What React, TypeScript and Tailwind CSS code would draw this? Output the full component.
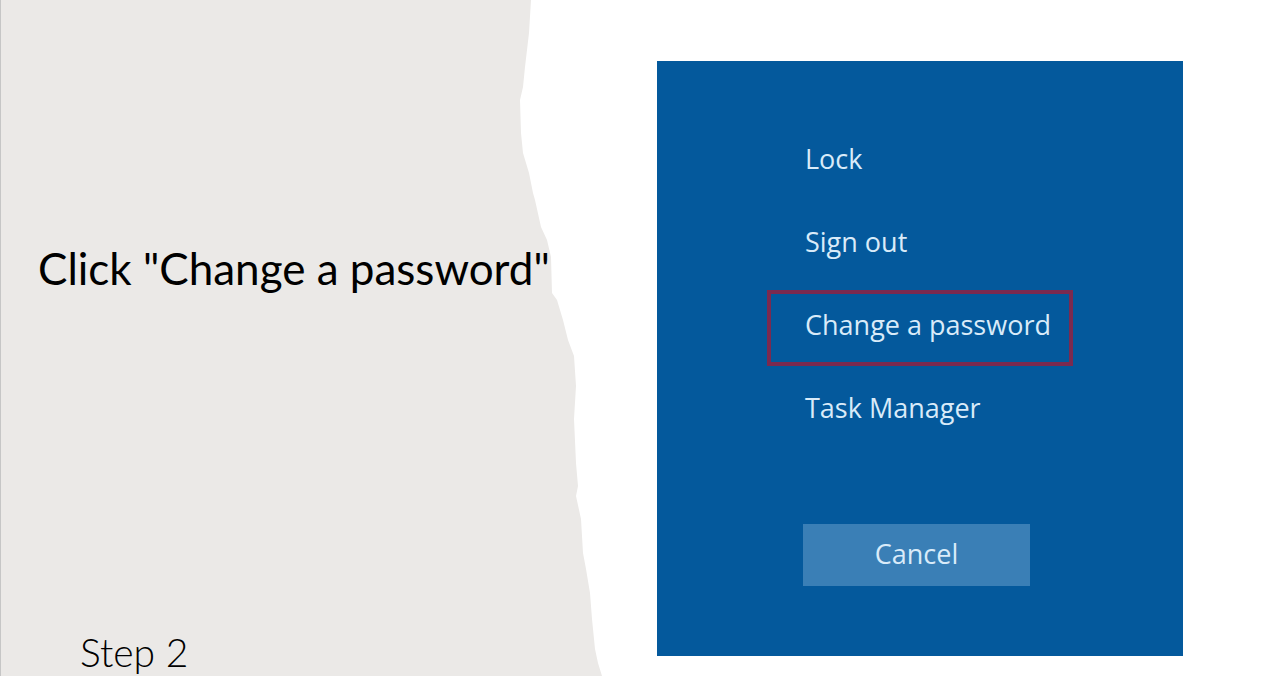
import React from "react";

export default function App() {
  const items = ["Lock", "Sign out", "Change a password", "Task Manager"];
  return (
    <div className="flex w-[1274px] h-[676px] bg-white overflow-hidden">
      <div className="w-[603px] h-[676px] shrink-0 bg-[#ebe9e7] border-l border-[#c6c6c6] flex flex-col [clip-path:polygon(0px_0px,531px_0px,529px_33px,525px_67px,523px_87px,520px_100px,521px_133px,523px_153px,529px_173px,533px_193px,535px_200px,541px_227px,547px_240px,551px_257px,552px_293px,557px_300px,563px_320px,568px_340px,574px_356px,576px_386px,574px_419px,576px_463px,578px_486px,576px_496px,581px_519px,583px_553px,586px_569px,590px_593px,592px_619px,595px_649px,598px_663px,602px_676px,0px_676px)]">
        <div className="pt-[240px] pl-[37px] text-[44px] leading-[56px] text-black whitespace-nowrap [font-family:Lato,'Liberation_Sans',sans-serif]">
          Click "Change a password"
        </div>
        <div className="mt-auto pl-[79px] text-[39px] leading-[48px] text-black font-light [font-family:Lato,'Liberation_Sans',sans-serif]">
          Step 2
        </div>
      </div>
      <div className="ml-[54px] mt-[61px] w-[526px] h-[595px] bg-[#04599c] flex flex-col pt-[63px] [font-family:'Open_Sans','Noto_Sans',sans-serif] text-[#d9ebf9]">
        {items.map((t, i) => (
          <div
            key={t}
            className={
              "ml-[110px] mb-[7px] h-[76px] flex items-center pl-[34px] pb-[5px] text-[27px] font-medium w-[306px] border-4 " +
              (i === 2 ? "border-[#7b2a50]" : "border-transparent")
            }
          >
            {t}
          </div>
        ))}
        <div className="ml-[146px] mt-[68px] w-[227px] h-[62px] bg-[#3a7fb6] flex items-center justify-center text-[27px] font-medium pb-[2px]">
          Cancel
        </div>
      </div>
    </div>
  );
}
